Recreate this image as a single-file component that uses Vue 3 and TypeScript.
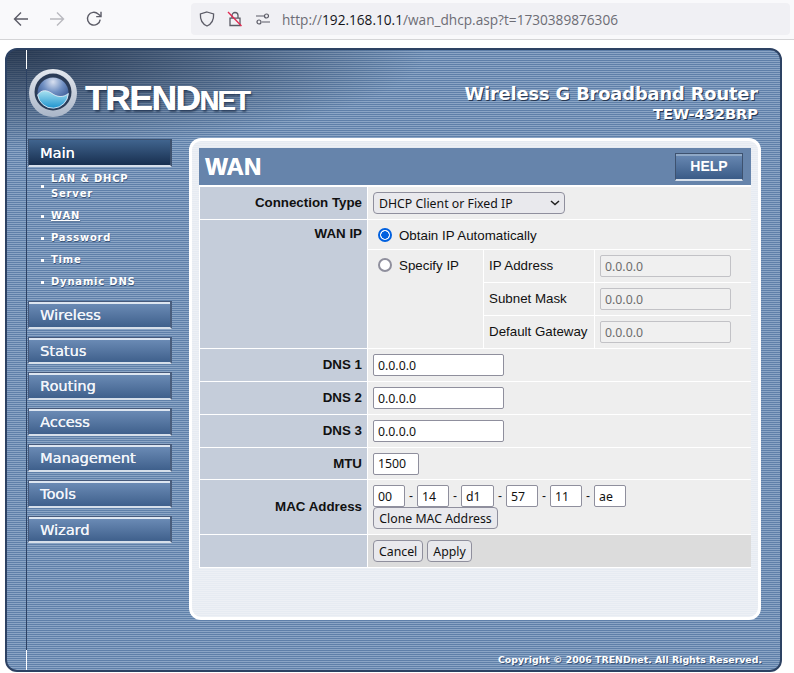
<script setup lang="ts">
interface SubItem { label: string; current?: boolean }
const navAfter: string[] = ['Wireless', 'Status', 'Routing', 'Access', 'Management', 'Tools', 'Wizard']
const subItems: SubItem[] = [
  { label: 'LAN & DHCP Server' },
  { label: 'WAN', current: true },
  { label: 'Password' },
  { label: 'Time' },
  { label: 'Dynamic DNS' },
]
const staticRows: string[] = ['IP Address', 'Subnet Mask', 'Default Gateway']
const dnsRows: string[] = ['DNS 1', 'DNS 2', 'DNS 3']
const mac: { value: string; wide?: boolean }[] = [
  { value: '00' }, { value: '14' }, { value: 'd1', wide: true }, { value: '57' }, { value: '11' }, { value: 'ae' },
]
</script>

<template>
  <div class="page">
    <header class="toolbar">
      <svg class="tool" width="16" height="16" viewBox="0 0 16 16" fill="none" stroke="#5b5b66" stroke-width="1.4">
        <path d="M15 8H1.500M8 1.500 1.500 8 8 14.500" />
      </svg>
      <svg class="tool tool-fwd" width="16" height="16" viewBox="0 0 16 16" fill="none" stroke="#b9b9bf" stroke-width="1.4">
        <path d="M1 8h13.500M8 1.500 14.500 8 8 14.500" />
      </svg>
      <svg class="tool tool-reload" width="16" height="16" viewBox="0 0 16 16" fill="none" stroke="#5b5b66" stroke-width="1.4">
        <path d="M14.200 8.600A6.400 6.400 0 1 1 12.200 3L14.600 5" />
        <path d="M15 .8v4.800h-4.800" />
      </svg>
      <div class="urlbar">
        <svg class="u-shield" width="16" height="16" viewBox="0 0 16 16" fill="none" stroke="#5b5b66" stroke-width="1.300">
          <path d="M8 1 14.600 3c.3 5.500-1.600 9.800-6.600 12C3 12.800 1.100 8.500 1.400 3Z" />
        </svg>
        <svg class="u-lock" width="16" height="16" viewBox="0 0 16 16" fill="none" stroke="#5b5b66" stroke-width="1.300">
          <path d="M5 7V4.500a3 3 0 0 1 6 0V7M3 7.200h10v7.300H3Z" />
          <path d="M1 1 14.500 15" stroke="#e22850" />
        </svg>
        <svg class="u-perm" width="16" height="16" viewBox="0 0 16 16" fill="none" stroke="#5b5b66" stroke-width="1.200">
          <circle cx="11.500" cy="5" r="2" />
          <circle cx="4" cy="11" r="2" />
          <path d="M1 5h8M7 11h8" />
        </svg>
        <span class="url"><span class="dim">http://</span>192.168.10.1<span class="dim">/wan_dhcp.asp?t=1730389876306</span></span>
      </div>
    </header>

    <div class="frame">
      <div class="brand">
        <div class="logo">
          <svg width="48" height="48" viewBox="0 0 48 48">
            <defs>
              <radialGradient id="sph" cx="50%" cy="14%" r="75%">
                <stop offset="0" stop-color="#d8e0f0" />
                <stop offset=".45" stop-color="#6f8fc2" />
                <stop offset="1" stop-color="#2b4a86" />
              </radialGradient>
              <linearGradient id="sea" x1="0" y1="0" x2="0" y2="1">
                <stop offset="0" stop-color="#a9e2f0" />
                <stop offset="1" stop-color="#1d93cf" />
              </linearGradient>
              <linearGradient id="rim" x1="0" y1="0" x2="0" y2="1">
                <stop offset="0" stop-color="#e4e8ee" />
                <stop offset="1" stop-color="#aab6c8" />
              </linearGradient>
            </defs>
            <circle cx="24" cy="24" r="24" fill="url(#rim)" />
            <circle cx="24" cy="23" r="18.500" fill="#2b3c57" />
            <circle cx="24" cy="24" r="15.500" fill="url(#sph)" />
            <path d="M8.600 26C13 20 18 21 23 24.500S34 29 39.400 24.500A15.500 15.500 0 0 1 8.600 26Z" fill="url(#sea)" stroke="#eef4fa" stroke-width=".8" />
          </svg>
          <span class="logotype">TREND<small>NET</small></span>
        </div>
        <div class="product">
          <div class="product-name">Wireless G Broadband Router</div>
          <div class="product-model">TEW-432BRP</div>
        </div>
      </div>

      <div class="main">
        <nav class="side">
          <a class="nav-btn active">Main</a>
          <ul class="sub">
            <li v-for="item in subItems" :key="item.label" :class="{ current: item.current }">
              <span>{{ item.label }}</span>
            </li>
          </ul>
          <a v-for="n in navAfter" :key="n" class="nav-btn">{{ n }}</a>
        </nav>

        <section class="panel">
          <div class="title-bar">
            <h1>WAN</h1>
            <button class="help" type="button">HELP</button>
          </div>
          <div class="form-grid">
            <div class="lbl row-32">Connection Type</div>
            <div class="val row-32">
              <div class="select-wrap">
                <select class="select">
                  <option>DHCP Client or Fixed IP</option>
                </select>
                <svg class="chev" width="10" height="6" viewBox="0 0 10 6" fill="none" stroke="#222" stroke-width="1.500">
                  <path d="M1 1l4 3.600L9 1" />
                </svg>
              </div>
            </div>

            <div class="lbl top">WAN IP</div>
            <div class="wan-ip">
              <div class="ip-opt">
                <span class="radio on"></span>
                <span>Obtain IP Automatically</span>
              </div>
              <div class="ip-specify">
                <div class="spec-cell">
                  <span class="radio"></span>
                  <span>Specify IP</span>
                </div>
                <div class="spec-grid">
                  <template v-for="r in staticRows" :key="r">
                    <div class="spec-label">{{ r }}</div>
                    <div class="spec-input"><input class="input disabled" value="0.0.0.0" disabled /></div>
                  </template>
                </div>
              </div>
            </div>

            <template v-for="d in dnsRows" :key="d">
              <div class="lbl row-32">{{ d }}</div>
              <div class="val row-32"><input class="input dns" value="0.0.0.0" /></div>
            </template>

            <div class="lbl row-31">MTU</div>
            <div class="val row-31"><input class="input mtu" value="1500" /></div>

            <div class="lbl row-mac">MAC Address</div>
            <div class="val row-mac mac-cell">
              <div class="mac-row">
                <template v-for="(m, i) in mac" :key="i">
                  <span v-if="i > 0" class="dash">-</span>
                  <input class="input octet" :class="{ wide: m.wide }" :value="m.value" />
                </template>
              </div>
              <button class="btn clone" type="button">Clone MAC Address</button>
            </div>

            <div class="lbl row-32"></div>
            <div class="val row-32 actions">
              <button class="btn" type="button">Cancel</button>
              <button class="btn" type="button">Apply</button>
            </div>
          </div>
        </section>
      </div>

      <footer class="copy">Copyright © 2006 TRENDnet. All Rights Reserved.</footer>
    </div>
  </div>
</template>

<style>
html, body { margin: 0; background: #fff; }
</style>

<style scoped>
* { box-sizing: border-box; }
.page {
  width: 794px;
  height: 673px;
  overflow: hidden;
  background: #fff;
  font-family: "Liberation Sans", Arial, sans-serif;
  font-size: 13.33px;
  color: #111;
}
.toolbar {
  height: 40px;
  background: #f9f9fb;
  border-bottom: 1px solid #d4d4d6;
  display: flex;
  align-items: center;
  padding: 0 4px 1px 13px;
}
.tool { flex: none; }
.tool-fwd { margin-left: 20px; }
.tool-reload { margin-left: 21px; }
.urlbar {
  flex: none;
  margin-left: 89px;
  width: 599px;
  height: 32px;
  border-radius: 4px;
  background: #f0f0f4;
  display: flex;
  align-items: center;
  padding-left: 8px;
}
.u-lock { margin-left: 12px; }
.u-perm { margin-left: 12px; }
.url {
  margin-left: 11px;
  font-family: "Open Sans", sans-serif;
  font-size: 13.650px;
  color: #15141a;
  white-space: nowrap;
}
.dim { color: #6d6d75; }

.frame {
  position: relative;
  width: 777px;
  height: 624px;
  margin: 8px 0 0 5px;
  border: 2px solid #2d4263;
  border-radius: 12px;
  overflow: hidden;
  background:
    radial-gradient(ellipse 420px 100px at 0 0, rgba(22, 34, 54, .78), rgba(22, 34, 54, 0)),
    repeating-linear-gradient(180deg, #5f80a9 0 1px, #8ba5c5 1px 2px);
}
.frame::before {
  content: "";
  position: absolute;
  left: 19px;
  top: 0;
  bottom: 0;
  width: 1px;
  background: linear-gradient(180deg, #fff 0 19px, #2d4263 19px 600px, #fff 600px);
}
.brand {
  height: 88px;
  display: flex;
  justify-content: space-between;
  padding: 19px 22px 0 22px;
}
.logo { display: flex; align-items: flex-start; }
.logotype {
  margin: 13px 0 0 8px;
  font-weight: 700;
  font-size: 35px;
  line-height: 32px;
  letter-spacing: -1.200px;
  color: #fff;
  text-shadow: .5px 0 0 #fff, 2px 2px 2px rgba(20, 35, 60, .6);
}
.logotype small { font-size: 27px; letter-spacing: -1.500px; }
.product { text-align: right; padding-top: 14px; color: #fff; font-family: "DejaVu Sans", sans-serif; font-weight: 700; }
.product-name {
  font-size: 17.800px;
  line-height: 22px;
  letter-spacing: -.1px;
  text-shadow: 1px 1px 0 #26364f;
}
.product-model {
  font-size: 14.600px;
  line-height: 17px;
  text-shadow: 1px 1px 0 #26364f;
}

.main { display: flex; align-items: flex-start; }
.side { width: 144px; margin: 1px 17px 0 21px; flex: none; }
.nav-btn {
  display: block;
  height: 27.800px;
  margin-bottom: 8px;
  padding-left: 11px;
  border: 1px solid #46597a;
  border-right: 2px solid #4a5e7d;
  border-bottom: 2px solid #d6dfea;
  background: linear-gradient(180deg, #6e8eb8, #3f608c);
  box-shadow: inset 0 2px 0 #dde6f1;
  font-family: "DejaVu Sans", sans-serif;
  font-size: 14.500px;
  line-height: 26px;
  color: #f2f5fa;
  text-shadow: .3px 0 0 #f2f5fa;
}
.nav-btn.active {
  margin-bottom: 0;
  background: linear-gradient(180deg, #40648e, #182f4f);
  box-shadow: none;
  border-color: #3e526f;
  border-bottom-color: #d6dfea;
  color: #fff;
}
.sub { list-style: none; margin: 0 0 8px; padding: 0; }
.sub li {
  position: relative;
  padding: 0 20px 0 23px;
  display: flex;
  align-items: center;
  min-height: 22px;
  font-family: "DejaVu Sans", sans-serif;
  font-weight: 700;
  font-size: 10px;
  line-height: 15px;
  letter-spacing: .8px;
  color: #fff;
  text-shadow: .5px .5px 0 #3c5578;
}
.sub li:first-child { padding-top: 4px; padding-bottom: 4px; }
.sub li::before {
  content: "";
  position: absolute;
  left: 13px;
  top: 50%;
  width: 3px;
  height: 3px;
  margin-top: -1px;
  background: #fff;
}
.sub li.current span { text-decoration: underline; }

.panel {
  width: 572px;
  height: 482px;
  flex: none;
  padding: 7px 7px 0;
  border: 3px solid #fff;
  border-radius: 12px;
  background: repeating-linear-gradient(180deg, #e6ebf2 0 1px, #edf0f5 1px 2px);
}
.title-bar {
  height: 37px;
  background: #6684ab;
  display: flex;
  align-items: center;
  justify-content: space-between;
  padding: 0 8px 0 6px;
}
h1 {
  margin: 0;
  font-size: 24px;
  font-weight: 700;
  line-height: 37px;
  color: #fff;
  text-shadow: .5px 0 0 #fff;
}
.help {
  width: 68px;
  height: 28px;
  padding: 0;
  border: 1px solid #3e526f;
  border-bottom: 2px solid #d6dfea;
  background: linear-gradient(180deg, #6a8ab4, #3a5b87);
  box-shadow: inset 0 2px 0 #8fa8c6;
  color: #fff;
  font-family: "Liberation Sans", sans-serif;
  font-weight: 700;
  font-size: 14px;
  line-height: 22px;
}
.form-grid {
  display: grid;
  grid-template-columns: 167px 383px;
  gap: 1px;
  padding: 2px 1px 1px 1px;
  background: #fff;
}
.lbl {
  background: #c5cdda;
  font-weight: 700;
  text-align: right;
  padding: 0 5px 1px 0;
  display: flex;
  align-items: center;
  justify-content: flex-end;
}
.lbl.top { align-items: flex-start; padding-top: 6px; line-height: 15px; }
.val {
  background: #eee;
  padding-left: 5px;
  display: flex;
  align-items: center;
}
.row-32 { height: 32px; }
.row-31 { height: 31px; }
.row-mac { height: 54px; }
.actions { background: #dcdcdc; gap: 4px; }
.select-wrap { position: relative; width: 192px; height: 22px; }
.select {
  appearance: none;
  width: 100%;
  height: 100%;
  display: block;
  padding: 0 0 0 5px;
  border: 1px solid #8f8f9d;
  border-radius: 4px;
  background: #e9e9ed;
  color: #111;
  font-family: "Noto Sans", sans-serif;
  font-size: 12.300px;
}
.chev { position: absolute; right: 5px; top: 8px; pointer-events: none; }
.wan-ip {
  display: grid;
  grid-template-rows: 29px 98px;
  gap: 1px;
  background: #fff;
}
.ip-opt, .spec-cell {
  background: #eee;
  display: flex;
  align-items: center;
  gap: 7px;
  padding-left: 10px;
}
.ip-opt { padding-top: 1px; }
.spec-cell { align-items: flex-start; padding-top: 8px; line-height: 15px; }
.ip-specify {
  display: grid;
  grid-template-columns: 115px 267px;
  gap: 1px;
}
.spec-grid {
  display: grid;
  grid-template-columns: 110px 156px;
  grid-auto-rows: 32px;
  gap: 1px;
}
.spec-label { background: #eee; display: flex; align-items: center; padding: 0 0 2px 5px; }
.spec-input { background: #eee; display: flex; align-items: center; padding-left: 5px; }
.radio {
  flex: none;
  width: 14px;
  height: 14px;
  border-radius: 50%;
  border: 2px solid #8f8f9d;
  background: #fff;
}
.radio.on {
  border-color: #0060df;
  background: radial-gradient(circle, #0060df 0 3.500px, #fff 4px);
}
.input {
  display: block;
  height: 22px;
  padding: 0 4px;
  border: 1px solid #8f8f9d;
  border-radius: 2px;
  background: #fff;
  color: #111;
  font-family: "Noto Sans", sans-serif;
  font-size: 12.300px;
  outline: none;
}
.dns { width: 131px; }
.mtu { width: 46px; }
.disabled { width: 131px; background: #f0f0f0; border-color: #c2c2c6; color: #6d6d6d; }
.mac-cell { flex-direction: column; align-items: flex-start; padding-top: 5px; }
.mac-row { display: flex; align-items: center; height: 22px; }
.octet { width: 32px; padding: 0 3px 0 4px; }
.octet.wide { width: 33px; }
.dash { width: 12px; text-align: center; font-size: 12px; }
.btn {
  height: 22px;
  padding: 0 5px;
  border: 1px solid #8f8f9d;
  border-radius: 4px;
  background: #e9e9ed;
  color: #111;
  font-family: "Noto Sans", sans-serif;
  font-size: 12.300px;
  white-space: nowrap;
}
.clone { width: 125px; }
.copy {
  position: absolute;
  right: 18px;
  bottom: 3px;
  font-family: "DejaVu Sans", sans-serif;
  font-weight: 700;
  font-size: 9.400px;
  line-height: 14px;
  color: #fff;
  text-shadow: 1px 1px 0 #3c5578;
}
</style>
